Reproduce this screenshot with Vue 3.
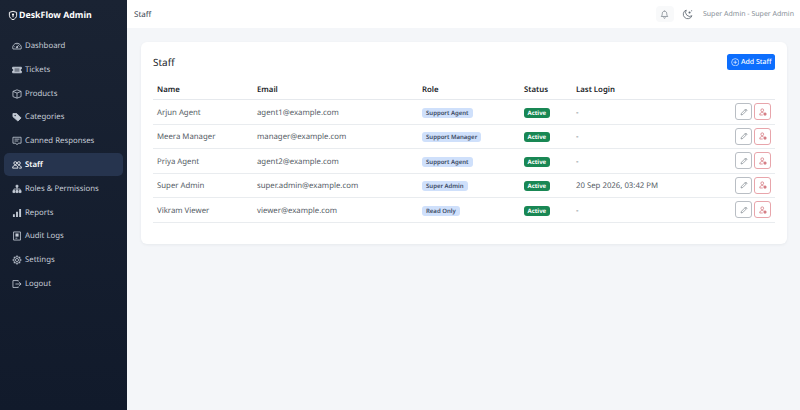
<script setup>
const navItems = [
  { label: 'Dashboard', icon: 'dash' },
  { label: 'Tickets', icon: 'ticket' },
  { label: 'Products', icon: 'box' },
  { label: 'Categories', icon: 'tag' },
  { label: 'Canned Responses', icon: 'chat' },
  { label: 'Staff', icon: 'people', active: true },
  { label: 'Roles & Permissions', icon: 'roles' },
  { label: 'Reports', icon: 'bars' },
  { label: 'Audit Logs', icon: 'journal' },
  { label: 'Settings', icon: 'gear' },
  { label: 'Logout', icon: 'logout' }
]

const staff = [
  { name: 'Arjun Agent', email: 'agent1@example.com', role: 'Support Agent', login: '-' },
  { name: 'Meera Manager', email: 'manager@example.com', role: 'Support Manager', login: '-' },
  { name: 'Priya Agent', email: 'agent2@example.com', role: 'Support Agent', login: '-' },
  { name: 'Super Admin', email: 'super.admin@example.com', role: 'Super Admin', login: '20 Sep 2026, 03:42 PM' },
  { name: 'Vikram Viewer', email: 'viewer@example.com', role: 'Read Only', login: '-' }
]
</script>

<template>
  <div class="layout">
    <aside class="sidebar">
      <div class="brand">
        <svg class="brand-icon" viewBox="0 0 16 16" fill="none" stroke="currentColor" stroke-width="1.500">
          <path d="M8 1.200 13.800 3v4.600c0 3.400-2.500 5.800-5.800 7.200-3.300-1.400-5.800-3.800-5.800-7.200V3z" />
          <circle cx="8" cy="6.400" r="1.700" fill="currentColor" stroke="none" />
          <path d="M8 7.500v3.200" />
        </svg>
        <span>DeskFlow Admin</span>
      </div>
      <nav class="nav">
        <a v-for="item in navItems" :key="item.label" class="nav-link" :class="{ active: item.active }">
          <svg class="nav-icon" viewBox="0 0 16 16" fill="none" stroke="currentColor" stroke-width="1.300">
            <template v-if="item.icon === 'dash'">
              <path d="M1.500 12.800a6.900 6.900 0 1 1 13 0z" />
              <path d="M8 10l3-4" />
              <circle cx="8" cy="10" r="1.100" fill="currentColor" />
              <path d="M3.800 9h1M11.400 9h1M8 4.600v1" />
            </template>
            <template v-else-if="item.icon === 'ticket'">
              <path d="M1 3.500h14v2.800a1.700 1.700 0 0 0 0 3.400v2.800H1V9.700a1.700 1.700 0 0 0 0-3.400z" fill="currentColor" />
              <path d="M4 6.500h8M4 9.500h8" stroke="#1a2333" />
            </template>
            <template v-else-if="item.icon === 'box'">
              <path d="M8 1.300 14.500 3.800v8.400L8 14.700 1.500 12.200V3.800z" />
              <path d="M1.500 3.800 8 6.500 14.500 3.800M8 6.500v8.200" />
            </template>
            <template v-else-if="item.icon === 'tag'">
              <path d="M1.500 2.500h6l7 7-5 5-8-7z" fill="currentColor" />
              <circle cx="5" cy="5.500" r="1.100" fill="#1a2333" stroke="none" />
            </template>
            <template v-else-if="item.icon === 'chat'">
              <path d="M1.500 2h13v9.500H10L8 14l-2-2.500H1.500z" />
              <path d="M4 5h8M4 8h6" />
            </template>
            <template v-else-if="item.icon === 'people'">
              <circle cx="5.200" cy="5" r="2.300" />
              <circle cx="11" cy="5" r="2.300" />
              <path d="M1 13c0-3 2-4.500 4.200-4.500S9.500 10 9.500 13zM10 8.600c2.800-.4 5 1.400 5 4.400h-3.500" />
            </template>
            <template v-else-if="item.icon === 'roles'">
              <path d="M6.500 2h3v3h-3zM1.500 10.500h3.200v3.200H1.500zM6.400 10.500h3.200v3.200H6.400zM11.300 10.500h3.200v3.200h-3.200z" fill="currentColor" />
              <path d="M8 5v5.500M3 10.500V8h10v2.500" />
            </template>
            <template v-else-if="item.icon === 'bars'">
              <path d="M1.500 10h3v4.500h-3zM6.500 6h3v8.500h-3zM11.500 1.500h3v13h-3z" fill="currentColor" stroke="none" />
            </template>
            <template v-else-if="item.icon === 'journal'">
              <path d="M2.500 1.500h11v13h-11z" />
              <path d="M5.500 4h5v5h-5z" fill="currentColor" stroke="none" />
              <path d="M5.500 11.500h3" />
            </template>
            <template v-else-if="item.icon === 'gear'">
              <circle cx="8" cy="8" r="2.500" />
              <circle cx="8" cy="8" r="5.300" />
              <path d="M8 .8v2M8 13.200v2M.8 8h2M13.200 8h2M2.900 2.900l1.400 1.400M11.700 11.700l1.400 1.400M2.900 13.100l1.400-1.400M11.700 4.300l1.400-1.400" stroke-width="1.800" />
            </template>
            <template v-else>
              <path d="M10 4V2.500H1.500v11H10V12" />
              <path d="M5.500 8h9M11.500 5l3 3-3 3" />
            </template>
          </svg>
          <span>{{ item.label }}</span>
        </a>
      </nav>
    </aside>

    <div class="content">
      <header class="topbar">
        <span class="crumb">Staff</span>
        <div class="top-right">
          <button class="bell-btn">
            <svg viewBox="0 0 16 16" fill="none" stroke="currentColor" stroke-width="1.100">
              <path d="M8 2.200c-2.500 0-4 1.800-4 4.300 0 3-1.200 4.300-1.700 5h11.400c-.5-.7-1.700-2-1.700-5 0-2.500-1.500-4.300-4-4.300zM8 1v1.200M6.500 13.200a1.500 1.500 0 0 0 3 0" />
            </svg>
          </button>
          <svg class="moon" viewBox="0 0 16 16" fill="none" stroke="currentColor" stroke-width="1.200">
            <path d="M6.200 1.500a6.500 6.500 0 1 0 8.300 8.300 6 6 0 0 1-8.300-8.300z" />
            <circle cx="11" cy="5" r="1.500" fill="currentColor" stroke="none" />
            <circle cx="14" cy="2.500" r=".8" fill="currentColor" stroke="none" />
          </svg>
          <span class="user">Super Admin - Super Admin</span>
        </div>
      </header>

      <main class="main">
        <section class="card">
          <div class="card-head">
            <h2>Staff</h2>
            <button class="add-btn">
              <svg viewBox="0 0 16 16" fill="none" stroke="currentColor" stroke-width="1.200">
                <circle cx="8" cy="8" r="6.800" />
                <path d="M8 4.500v7M4.500 8h7" />
              </svg>
              Add Staff
            </button>
          </div>
          <table class="table">
            <thead>
              <tr>
                <th>Name</th>
                <th>Email</th>
                <th>Role</th>
                <th>Status</th>
                <th>Last Login</th>
                <th></th>
              </tr>
            </thead>
            <tbody>
              <tr v-for="row in staff" :key="row.email">
                <td>{{ row.name }}</td>
                <td>{{ row.email }}</td>
                <td><span class="role">{{ row.role }}</span></td>
                <td><span class="status">Active</span></td>
                <td>{{ row.login }}</td>
                <td class="actions-cell">
                  <div class="actions">
                    <button class="act">
                      <svg viewBox="0 0 16 16" fill="none" stroke="currentColor" stroke-width="1.200">
                        <path d="M11.500 2 14 4.500 5.500 13 2 14l1-3.500zM10 3.500 12.500 6" />
                      </svg>
                    </button>
                    <button class="act danger">
                      <svg viewBox="0 0 16 16" fill="none" stroke="currentColor" stroke-width="1.200">
                        <circle cx="6.500" cy="4.500" r="2.800" />
                        <path d="M1.500 14c0-3.500 2-5 5-5 1 0 1.800.2 2.500.5M1.500 14h6" />
                        <circle cx="12" cy="12" r="3" fill="currentColor" stroke="none" />
                        <path d="M10.800 10.800l2.400 2.400M13.200 10.800l-2.400 2.400" stroke="#fff" stroke-width=".8" />
                      </svg>
                    </button>
                  </div>
                </td>
              </tr>
            </tbody>
          </table>
        </section>
      </main>
    </div>
  </div>
</template>

<style scoped>
.layout {
  display: flex;
  width: 800px;
  height: 410px;
  overflow: hidden;
  font-family: "Noto Sans", "Liberation Sans", sans-serif;
  text-rendering: geometricPrecision;
  background: #f4f6f9;
}

.sidebar {
  width: 127px;
  flex-shrink: 0;
  background: linear-gradient(180deg, #1a2333, #111a2b);
  color: #c4cbd6;
  padding: 0 4px;
  box-sizing: border-box;
}

.brand {
  display: flex;
  align-items: center;
  gap: 1px;
  height: 30px;
  padding-left: 4px;
  color: #fff;
  font-size: 8.800px;
  font-weight: 700;
}

.brand-icon {
  width: 10px;
  height: 11px;
}

.nav {
  display: flex;
  flex-direction: column;
  gap: 0.800px;
  margin-top: 4.500px;
}

.nav-link {
  display: flex;
  align-items: center;
  gap: 3px;
  height: 23px;
  padding-left: 8px;
  border-radius: 5px;
  font-size: 7.800px;
}

.nav-link.active {
  background: #26344e;
  color: #fff;
  font-weight: 600;
}

.nav-icon {
  width: 10px;
  height: 10px;
  flex-shrink: 0;
}

.content {
  flex: 1;
  display: flex;
  flex-direction: column;
  min-width: 0;
}

.topbar {
  height: 28px;
  background: #fff;
  display: flex;
  align-items: center;
  justify-content: space-between;
  padding: 0 6px 0 7px;
  flex-shrink: 0;
}

.crumb {
  font-size: 8px;
  color: #3c4653;
}

.top-right {
  display: flex;
  align-items: center;
  color: #5c6670;
}

.bell-btn {
  width: 18px;
  height: 16px;
  padding: 0 4px;
  border: none;
  border-radius: 4px;
  background: #f8f9fa;
  color: #5c6670;
  margin-right: 8px;
  box-sizing: border-box;
}

.bell-btn svg {
  width: 9px;
  height: 9px;
  display: block;
  margin: auto;
}

.moon {
  width: 11px;
  height: 11px;
  margin-right: 10px;
}

.user {
  font-size: 7px;
  color: #868e96;
}

.main {
  flex: 1;
  padding: 14px 13px 14px 14px;
}

.card {
  background: #fff;
  border-radius: 6px;
  height: 202px;
  padding: 12px 12px 0;
  box-sizing: border-box;
  box-shadow: 0 1px 3px rgba(20, 30, 50, 0.06);
}

.card-head {
  display: flex;
  align-items: center;
  justify-content: space-between;
  height: 16px;
  margin-bottom: 9px;
}

.card-head h2 {
  margin: 0;
  font-size: 10px;
  font-weight: 400;
  color: #212529;
}

.add-btn {
  display: flex;
  align-items: center;
  gap: 1.500px;
  height: 16px;
  padding: 0 3.500px;
  border: none;
  border-radius: 2.500px;
  background: #0d6efd;
  color: #fff;
  font: 500 7px "Noto Sans", "Liberation Sans", sans-serif;
  text-rendering: geometricPrecision;
}

.add-btn svg {
  width: 8.500px;
  height: 8.500px;
}

.table {
  width: 100%;
  border-collapse: collapse;
  table-layout: fixed;
}

th {
  height: 19px;
  font-size: 7.800px;
  font-weight: 600;
  color: #212529;
  text-align: left;
  padding: 1px 0 0 4px;
  border-bottom: 1px solid #e6e9ed;
}

th:nth-child(1) { width: 96px; }
th:nth-child(2) { width: 161px; }
th:nth-child(3) { width: 98px; }
th:nth-child(4) { width: 48px; }

td {
  height: 21.500px;
  font-size: 7.800px;
  color: #555d66;
  padding: 2px 0 0 4px;
  border-bottom: 1px solid #e9ecef;
}

td.actions-cell {
  height: 23.500px;
  padding-top: 0;
}

.role {
  display: inline-block;
  padding: 1px 4px;
  border-radius: 3px;
  background: #cfe0fb;
  color: #3c4a63;
  font-size: 6px;
  font-weight: 600;
}

.status {
  display: inline-block;
  padding: 1px 3.500px;
  border-radius: 3px;
  background: #198754;
  color: #fff;
  font-size: 6px;
  font-weight: 700;
}

.actions {
  display: flex;
  justify-content: flex-end;
  gap: 2px;
  padding-right: 4px;
}

.act {
  width: 17px;
  height: 17px;
  padding: 0;
  display: flex;
  align-items: center;
  justify-content: center;
  border: 1px solid #b9bec4;
  border-radius: 3px;
  background: #fff;
  color: #6c757d;
}

.act svg {
  width: 8px;
  height: 8px;
}

.act.danger {
  border-color: #e8a5ab;
  color: #c9565f;
}
</style>

<style>
html, body {
  margin: 0;
  background: #f4f6f9;
}
</style>
